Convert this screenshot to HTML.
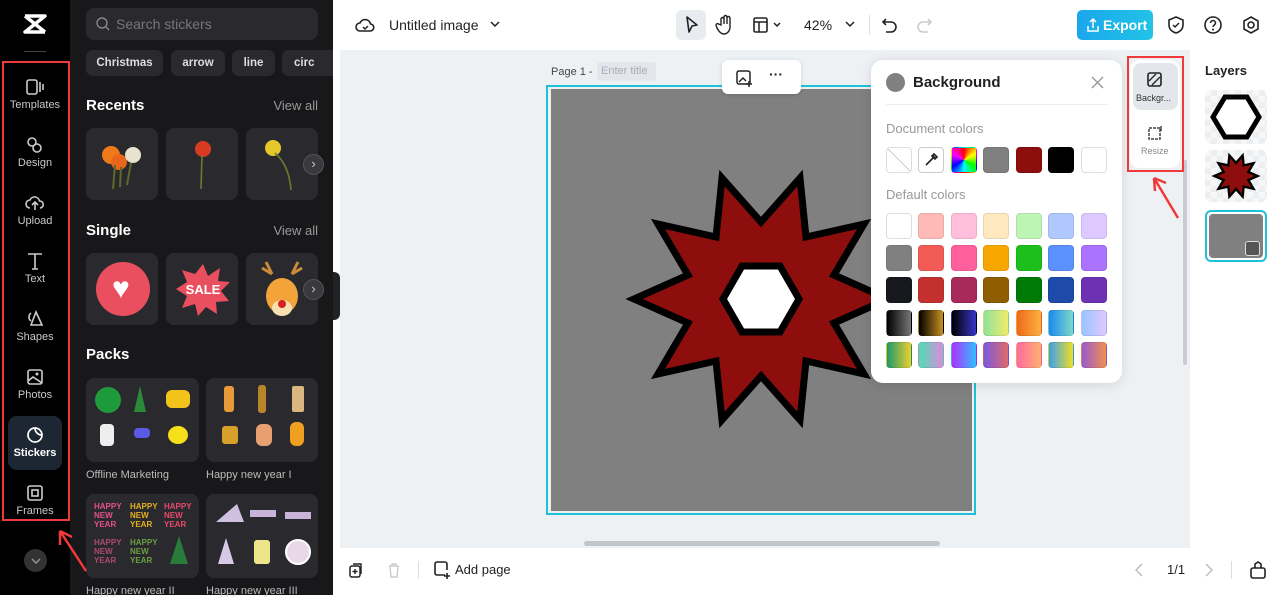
<!DOCTYPE html>
<html><head><meta charset="utf-8"><style>
*{box-sizing:border-box;margin:0;padding:0}
body{width:1280px;height:595px;overflow:hidden;font-family:"Liberation Sans",sans-serif;background:#fff;position:relative}
.a{position:absolute}
.nav{left:0;top:0;width:70px;height:595px;background:#000}
.ni{position:absolute;left:0;width:70px;text-align:center;color:#c9c9cc;font-size:11px}
.ni svg{display:block;margin:0 auto 3px}
.side{left:70px;top:0;width:263px;height:595px;background:#18181b}
.tile{position:absolute;background:#2a2a2e;border-radius:8px}
.chip{position:absolute;top:50px;height:26px;background:#2a2a2e;border-radius:7px;color:#ddd;font-size:11.5px;font-weight:bold;line-height:26px;text-align:center}
.h{position:absolute;color:#fff;font-weight:bold;font-size:15px}
.va{position:absolute;right:15px;color:#999;font-size:13px}
.sw{position:absolute;width:26px;height:26px;border-radius:4px;border:1px solid rgba(0,0,0,.08)}
.lbl{position:absolute;color:#bbb;font-size:11px}
</style></head><body>
<!-- left nav -->
<div class="a nav">
 <svg class="a" style="left:22px;top:13px" width="26" height="22" viewBox="0 0 26 22"><path d="M3 3h20L3 19h20M3 3l20 16" stroke="#fff" stroke-width="3.5" fill="none" stroke-linejoin="round"/></svg>
 <div class="a" style="left:24px;top:51px;width:22px;height:1px;background:#444"></div>
 <div class="ni" style="top:78px"><svg width="20" height="18" viewBox="0 0 20 18"><rect x="2" y="2" width="10" height="14" rx="2" stroke="#ccc" stroke-width="1.6" fill="none"/><path d="M15 4v10M18 6v6" stroke="#ccc" stroke-width="1.6"/></svg>Templates</div>
 <div class="ni" style="top:136px"><svg width="20" height="18" viewBox="0 0 20 18"><circle cx="7" cy="6" r="4" stroke="#ccc" stroke-width="1.6" fill="none"/><circle cx="12" cy="12" r="4" stroke="#ccc" stroke-width="1.6" fill="none"/></svg>Design</div>
 <div class="ni" style="top:194px"><svg width="20" height="18" viewBox="0 0 20 18"><path d="M5 14a4 4 0 010-8 5 5 0 019.5 1A3.5 3.5 0 0115 14M10 16V8M7 11l3-3 3 3" stroke="#ccc" stroke-width="1.6" fill="none"/></svg>Upload</div>
 <div class="ni" style="top:252px"><svg width="20" height="18" viewBox="0 0 20 18"><path d="M3 2h14M10 2v15M7 17h6" stroke="#ccc" stroke-width="1.6" fill="none"/></svg>Text</div>
 <div class="ni" style="top:310px"><svg width="20" height="18" viewBox="0 0 20 18"><path d="M6 3a5 5 0 000 8M11 2l6 13H6z" stroke="#ccc" stroke-width="1.6" fill="none"/></svg>Shapes</div>
 <div class="ni" style="top:368px"><svg width="20" height="18" viewBox="0 0 20 18"><rect x="3" y="2" width="14" height="14" rx="2" stroke="#ccc" stroke-width="1.6" fill="none"/><path d="M3 13l5-4 9 6" stroke="#ccc" stroke-width="1.6" fill="none"/><circle cx="12" cy="6" r="1.5" fill="#ccc"/></svg>Photos</div>
 <div class="a" style="left:8px;top:416px;width:54px;height:54px;border-radius:9px;background:#1d2733"></div>
 <div class="ni" style="top:426px;color:#fff;font-weight:bold"><svg width="20" height="18" viewBox="0 0 20 18"><path d="M17 9a7 7 0 11-7-7c0 4 3 7 7 7z M10 2a7 7 0 017 7" stroke="#fff" stroke-width="1.7" fill="none"/></svg>Stickers</div>
 <div class="ni" style="top:484px"><svg width="20" height="18" viewBox="0 0 20 18"><rect x="3" y="2" width="14" height="14" rx="2" stroke="#ccc" stroke-width="1.6" fill="none"/><rect x="7" y="6" width="6" height="6" stroke="#ccc" stroke-width="1.6" fill="none"/></svg>Frames</div>
 <div class="a" style="left:24px;top:549px;width:23px;height:23px;border-radius:50%;background:#333"></div>
 <svg class="a" style="left:30px;top:556px" width="12" height="10"><path d="M2 3l4 4 4-4" stroke="#999" stroke-width="1.4" fill="none"/></svg>
</div>
<div class="a" style="left:2px;top:61px;width:68px;height:460px;border:2.5px solid #f03a3a"></div>
<!-- side panel -->
<div class="a side">
 <div class="a" style="left:16px;top:8px;width:232px;height:32px;background:#2a2a2e;border-radius:8px;color:#777;font-size:14px;line-height:32px;padding-left:30px">Search stickers</div>
 <svg class="a" style="left:26px;top:17px" width="14" height="14"><circle cx="6" cy="6" r="5" stroke="#888" stroke-width="1.4" fill="none"/><path d="M10 10l3 3" stroke="#888" stroke-width="1.4"/></svg>
 <div class="chip" style="left:16px;width:77px">Christmas</div>
 <div class="chip" style="left:101px;width:54px">arrow</div>
 <div class="chip" style="left:162px;width:43px">line</div>
 <div class="chip" style="left:212px;width:51px;text-align:left;padding-left:12px;border-radius:7px 0 0 7px">circ</div>
 <div class="h" style="left:16px;top:97px">Recents</div><div class="va" style="top:98px">View all</div>
 <div class="tile" style="left:16px;top:128px;width:72px;height:72px"></div>
 <div class="tile" style="left:96px;top:128px;width:72px;height:72px"></div>
 <div class="tile" style="left:176px;top:128px;width:72px;height:72px"></div>
 <svg class="a" style="left:23px;top:135px" width="60" height="60"><circle cx="18" cy="20" r="9" fill="#f07a1a"/><circle cx="26" cy="27" r="8" fill="#e8661a"/><circle cx="40" cy="20" r="8" fill="#e8e2d0"/><path d="M22 30l-2 24M28 32l-1 20M38 28l-4 22" stroke="#5d6a2a" stroke-width="2"/></svg>
 <svg class="a" style="left:103px;top:135px" width="60" height="60"><circle cx="30" cy="14" r="8" fill="#d93a22"/><path d="M29 20l-1 34" stroke="#6c7a2e" stroke-width="1.6"/></svg>
 <svg class="a" style="left:183px;top:135px" width="60" height="60"><circle cx="20" cy="13" r="8" fill="#e6c82a"/><path d="M22 18q14 12 16 37" stroke="#6c7a2e" stroke-width="1.6" fill="none"/></svg>
 <div class="a" style="left:233px;top:154px;width:21px;height:21px;border-radius:50%;background:#3a3a3e;border:1px solid #555;color:#ccc;font-size:13px;text-align:center;line-height:18px">›</div>
 <div class="h" style="left:16px;top:222px">Single</div><div class="va" style="top:223px">View all</div>
 <div class="tile" style="left:16px;top:253px;width:72px;height:72px"></div>
 <div class="tile" style="left:96px;top:253px;width:72px;height:72px"></div>
 <div class="tile" style="left:176px;top:253px;width:72px;height:72px"></div>
 <div class="a" style="left:26px;top:262px;width:54px;height:54px;border-radius:50%;background:#e94f5e"></div>
 <div class="a" style="left:42px;top:278px;color:#fff;font-size:30px;line-height:22px">♥</div>
 <svg class="a" style="left:104px;top:260px" width="58" height="58" viewBox="0 0 58 58"><polygon points="29,4 34,16 46,8 44,21 56,22 47,31 55,41 42,42 43,54 32,47 24,56 21,44 8,48 13,36 2,29 13,22 8,10 21,14" fill="#e94f5e"/><text x="29" y="34" fill="#fff" font-size="13" font-weight="bold" text-anchor="middle" font-family="Liberation Sans">SALE</text></svg>
 <svg class="a" style="left:186px;top:258px" width="52" height="64"><path d="M10 4l6 12M42 4l-6 12M6 10l10 6M46 10l-10 6" stroke="#c98a3a" stroke-width="3"/><ellipse cx="26" cy="38" rx="16" ry="18" fill="#f2a43a"/><ellipse cx="26" cy="50" rx="10" ry="8" fill="#f8dfb0"/><circle cx="26" cy="46" r="4" fill="#d92020"/></svg>
 <div class="a" style="left:233px;top:279px;width:21px;height:21px;border-radius:50%;background:#3a3a3e;border:1px solid #555;color:#ccc;font-size:13px;text-align:center;line-height:18px">›</div>
 <div class="h" style="left:16px;top:346px">Packs</div>
 <div class="tile" style="left:16px;top:378px;width:113px;height:84px"></div>
 <div class="tile" style="left:136px;top:378px;width:112px;height:84px"></div>
 <div class="a" style="left:25px;top:387px;width:26px;height:26px;border-radius:50%;background:#1e9a3a"></div>
 <div class="a" style="left:64px;top:386px;width:12px;height:26px;background:#2a8a3a;clip-path:polygon(50% 0,100% 100%,0 100%)"></div>
 <div class="a" style="left:96px;top:390px;width:24px;height:18px;background:#f2c31a;border-radius:6px"></div>
 <div class="a" style="left:30px;top:424px;width:14px;height:22px;background:#eee;border-radius:4px"></div>
 <div class="a" style="left:64px;top:428px;width:16px;height:10px;background:#5a5ae6;border-radius:4px"></div>
 <div class="a" style="left:98px;top:426px;width:20px;height:18px;background:#f5e01a;border-radius:50%"></div>
 <div class="a" style="left:154px;top:386px;width:10px;height:26px;background:#e89a3a;border-radius:3px"></div>
 <div class="a" style="left:188px;top:385px;width:8px;height:28px;background:#b8862a;border-radius:3px"></div>
 <div class="a" style="left:222px;top:386px;width:12px;height:26px;background:#d8b880;border-radius:2px"></div>
 <div class="a" style="left:152px;top:426px;width:16px;height:18px;background:#d8a02a;border-radius:3px"></div>
 <div class="a" style="left:186px;top:424px;width:16px;height:22px;background:#e8a070;border-radius:6px"></div>
 <div class="a" style="left:220px;top:422px;width:14px;height:24px;background:#f0a020;border-radius:6px"></div>
 <div class="lbl" style="left:16px;top:469px">Offline Marketing</div>
 <div class="lbl" style="left:136px;top:469px">Happy new year I</div>
 <div class="tile" style="left:16px;top:494px;width:113px;height:84px"></div>
 <div class="tile" style="left:136px;top:494px;width:112px;height:84px"></div>
 <div class="a" style="left:24px;top:502px;font-size:8px;line-height:9px;color:#e6508a;font-weight:bold">HAPPY<br>NEW<br>YEAR</div>
 <div class="a" style="left:60px;top:502px;font-size:8px;line-height:9px;color:#e6b020;font-weight:bold">HAPPY<br>NEW<br>YEAR</div>
 <div class="a" style="left:94px;top:502px;font-size:8px;line-height:9px;color:#e64a6a;font-weight:bold">HAPPY<br>NEW<br>YEAR</div>
 <div class="a" style="left:24px;top:538px;font-size:8px;line-height:9px;color:#b04a6a;font-weight:bold">HAPPY<br>NEW<br>YEAR</div>
 <div class="a" style="left:60px;top:538px;font-size:8px;line-height:9px;color:#6aa040;font-weight:bold">HAPPY<br>NEW<br>YEAR</div>
 <div class="a" style="left:100px;top:536px;width:18px;height:28px;background:#2a7a3a;clip-path:polygon(50% 0,100% 100%,0 100%)"></div>
 <div class="a" style="left:146px;top:504px;width:28px;height:18px;background:#cfc0e0;clip-path:polygon(25% 0,50% 100%,0 100%,75% 0,100% 100%,50% 100%)"></div>
 <div class="a" style="left:180px;top:510px;width:26px;height:7px;background:#c8b4d8"></div>
 <div class="a" style="left:215px;top:512px;width:26px;height:7px;background:#c8b4d8"></div>
 <div class="a" style="left:148px;top:538px;width:16px;height:26px;background:#d8c8e8;clip-path:polygon(50% 0,100% 100%,0 100%)"></div>
 <div class="a" style="left:184px;top:540px;width:16px;height:24px;background:#eee58a;border-radius:3px"></div>
 <div class="a" style="left:215px;top:539px;width:26px;height:26px;background:#e8d8e8;border:2px solid #fff;border-radius:50%"></div>
 <div class="lbl" style="left:16px;top:585px">Happy new year II</div>
 <div class="lbl" style="left:136px;top:585px">Happy new year III</div>
</div>
<svg class="a" style="left:52px;top:525px" width="40" height="50"><path d="M34 46L8 6M8 6l0 14M8 6l12 6" stroke="#f03a3a" stroke-width="2.5" fill="none"/></svg>
<div class="a" style="left:333px;top:272px;width:7px;height:48px;background:#222;border-radius:0 6px 6px 0"></div>
<!-- top bar -->
<div class="a" style="left:340px;top:0;width:940px;height:50px;background:#fff"></div>
<svg class="a" style="left:355px;top:16px" width="20" height="18"><path d="M5 15a4 4 0 010-8 5.5 5.5 0 0110.5 1A3.5 3.5 0 0115 15z" stroke="#222" stroke-width="1.6" fill="none"/><path d="M8 11l2 2 3-3" stroke="#222" stroke-width="1.5" fill="none"/></svg>
<div class="a" style="left:389px;top:17px;font-size:14px;color:#222">Untitled image</div>
<svg class="a" style="left:489px;top:20px" width="12" height="10"><path d="M2 2l4 4 4-4" stroke="#222" stroke-width="1.5" fill="none"/></svg>
<div class="a" style="left:676px;top:10px;width:30px;height:30px;border-radius:6px;background:#e8ebef"></div>
<svg class="a" style="left:683px;top:15px" width="18" height="20"><path d="M4 2l10 8-5 1-3 6z" stroke="#222" stroke-width="1.6" fill="none" stroke-linejoin="round"/></svg>
<svg class="a" style="left:715px;top:14px" width="20" height="22"><path d="M6 11V5a1.5 1.5 0 013 0v5V3a1.5 1.5 0 013 0v7V4a1.5 1.5 0 013 0v9c0 4-3 7-6 7s-5-2-7-6l-1-3a1.5 1.5 0 012.5-1z" stroke="#222" stroke-width="1.4" fill="none"/></svg>
<svg class="a" style="left:752px;top:16px" width="32" height="18"><rect x="2" y="2" width="13" height="14" rx="1.5" stroke="#222" stroke-width="1.6" fill="none"/><path d="M2 6h13M7 6v10M22 7l3 3 3-3" stroke="#222" stroke-width="1.5" fill="none"/></svg>
<div class="a" style="left:804px;top:17px;font-size:14px;color:#222">42%</div>
<svg class="a" style="left:844px;top:20px" width="12" height="10"><path d="M2 2l4 4 4-4" stroke="#222" stroke-width="1.5" fill="none"/></svg>
<div class="a" style="left:869px;top:15px;width:1px;height:20px;background:#ddd"></div>
<svg class="a" style="left:881px;top:16px" width="18" height="18"><path d="M5 3L2 6l3 3M2 6h8a5 5 0 010 10H5" stroke="#222" stroke-width="1.6" fill="none"/></svg>
<svg class="a" style="left:915px;top:16px" width="18" height="18"><path d="M13 3l3 3-3 3M16 6H8a5 5 0 000 10h5" stroke="#ccc" stroke-width="1.6" fill="none"/></svg>
<div class="a" style="left:1077px;top:10px;width:76px;height:30px;border-radius:5px;background:linear-gradient(90deg,#1aa7ec,#22c3e6);color:#fff;font-weight:bold;font-size:14px;line-height:30px;padding-left:26px">Export</div>
<svg class="a" style="left:1086px;top:17px" width="14" height="16"><path d="M7 11V2M4 5l3-3 3 3M2 9v5h10V9" stroke="#fff" stroke-width="1.5" fill="none"/></svg>
<svg class="a" style="left:1166px;top:15px" width="20" height="20"><path d="M10 2l7 3v5c0 4-3 7-7 8-4-1-7-4-7-8V5z" stroke="#222" stroke-width="1.6" fill="none"/><path d="M7 10l2 2 4-4" stroke="#222" stroke-width="1.5" fill="none"/></svg>
<svg class="a" style="left:1203px;top:15px" width="20" height="20"><circle cx="10" cy="10" r="8" stroke="#222" stroke-width="1.6" fill="none"/><path d="M7.5 8a2.5 2.5 0 115 0c0 2-2.5 2-2.5 4" stroke="#222" stroke-width="1.5" fill="none"/><circle cx="10" cy="14.5" r="1" fill="#222"/></svg>
<svg class="a" style="left:1241px;top:15px" width="20" height="20"><path d="M10 2l7 4v8l-7 4-7-4V6z" stroke="#222" stroke-width="1.6" fill="none"/><circle cx="10" cy="10" r="3" stroke="#222" stroke-width="1.6" fill="none"/></svg>
<!-- canvas area -->
<div class="a" style="left:340px;top:50px;width:850px;height:498px;background:#eef1f4"></div>
<div class="a" style="left:551px;top:66px;font-size:11px;color:#444">Page 1 -</div>
<div class="a" style="left:597px;top:62px;width:59px;height:19px;background:#e3e6ea;border-radius:3px;font-size:11px;color:#aab;line-height:19px;padding-left:4px">Enter title</div>
<div class="a" style="left:546px;top:85px;width:430px;height:430px;border:2px solid #1fc1d8"></div>
<div class="a" style="left:551px;top:89px;width:421px;height:422px;background:#808080"></div>
<svg class="a" style="left:551px;top:89px" width="421" height="422">
 <polygon transform="translate(210,210)" stroke="#000" stroke-width="7" stroke-linejoin="miter" fill="#8e0e0e" points="127,0 73,24 103,75 45,62 39,121 0,77 -39,121 -45,62 -103,75 -73,24 -127,0 -73,-24 -103,-75 -45,-62 -39,-121 0,-77 39,-121 45,-62 103,-75 73,-24"/>
 <polygon transform="translate(210,210)" stroke="#000" stroke-width="7" fill="#fff" points="38,0 19,-33 -19,-33 -38,0 -19,33 19,33"/>
</svg>
<div class="a" style="left:722px;top:60px;width:79px;height:34px;background:#fff;border-radius:6px;box-shadow:0 1px 4px rgba(0,0,0,.15)"></div>
<svg class="a" style="left:735px;top:69px" width="20" height="18"><rect x="2" y="2" width="13" height="13" rx="2" stroke="#222" stroke-width="1.5" fill="none"/><path d="M4 13l4-4 3 3M14 12v6M11 15h6" stroke="#222" stroke-width="1.5" fill="none"/></svg>
<div class="a" style="left:769px;top:66px;font-size:14px;font-weight:bold;color:#222">···</div>
<div class="a" style="left:1183px;top:160px;width:4px;height:205px;background:#c8ccd0;border-radius:2px"></div>
<div class="a" style="left:584px;top:541px;width:356px;height:5px;background:#c2c6ca;border-radius:3px"></div>
<!-- background popup -->
<div class="a" style="left:871px;top:60px;width:251px;height:323px;background:#fff;border-radius:12px;box-shadow:0 2px 12px rgba(0,0,0,.12)"></div>
<div class="a" style="left:886px;top:73px;width:19px;height:19px;border-radius:50%;background:#808080"></div>
<div class="a" style="left:913px;top:74px;font-size:15px;font-weight:bold;color:#222">Background</div>
<svg class="a" style="left:1090px;top:75px" width="15" height="15"><path d="M2 2l11 11M13 2L2 13" stroke="#999" stroke-width="1.4"/></svg>
<div class="a" style="left:886px;top:104px;width:222px;height:1px;background:#eee"></div>
<div class="a" style="left:886px;top:121px;font-size:13px;color:#999">Document colors</div>
<div class="sw" style="left:886px;top:147px;background:linear-gradient(45deg,#fff 48%,#ccc 49%,#ccc 51%,#fff 52%);border-color:#ddd"></div>
<div class="sw" style="left:918px;top:147px;background:#fff;border-color:#ccc"></div>
<svg class="a" style="left:923px;top:152px" width="16" height="16"><path d="M3 13l7-7M9 3l4 4M11 2l3 3-2 2-3-3z" stroke="#222" stroke-width="1.6" fill="none"/></svg>
<div class="sw" style="left:951px;top:147px;background:conic-gradient(#f00,#ff0,#0f0,#0ff,#00f,#f0f,#f00)"></div>
<div class="sw" style="left:983px;top:147px;background:#808080"></div>
<div class="sw" style="left:1016px;top:147px;background:#8e0e0e"></div>
<div class="sw" style="left:1048px;top:147px;background:#000"></div>
<div class="sw" style="left:1081px;top:147px;background:#fff;border-color:#ddd"></div>
<div class="a" style="left:886px;top:187px;font-size:13px;color:#999">Default colors</div>
<div class="sw" style="left:886px;top:213px;background:#fff;border-color:#ddd"></div><div class="sw" style="left:918px;top:213px;background:#ffbab7"></div><div class="sw" style="left:951px;top:213px;background:#ffbedb"></div><div class="sw" style="left:983px;top:213px;background:#ffe8bd"></div><div class="sw" style="left:1016px;top:213px;background:#bcf5b5"></div><div class="sw" style="left:1048px;top:213px;background:#b0c8ff"></div><div class="sw" style="left:1081px;top:213px;background:#ddc8ff"></div>
<div class="sw" style="left:886px;top:245px;background:#808080"></div><div class="sw" style="left:918px;top:245px;background:#f05b55"></div><div class="sw" style="left:951px;top:245px;background:#ff5f9c"></div><div class="sw" style="left:983px;top:245px;background:#f8a700"></div><div class="sw" style="left:1016px;top:245px;background:#1dbf1d"></div><div class="sw" style="left:1048px;top:245px;background:#5b90ff"></div><div class="sw" style="left:1081px;top:245px;background:#aa72ff"></div>
<div class="sw" style="left:886px;top:277px;background:#16181d"></div><div class="sw" style="left:918px;top:277px;background:#c3302e"></div><div class="sw" style="left:951px;top:277px;background:#a82a5a"></div><div class="sw" style="left:983px;top:277px;background:#8e5e00"></div><div class="sw" style="left:1016px;top:277px;background:#007a06"></div><div class="sw" style="left:1048px;top:277px;background:#1e4aaa"></div><div class="sw" style="left:1081px;top:277px;background:#6d32b4"></div>
<div class="sw" style="left:886px;top:310px;background:linear-gradient(90deg,#000,#777)"></div><div class="sw" style="left:918px;top:310px;background:linear-gradient(90deg,#000,#c99020)"></div><div class="sw" style="left:951px;top:310px;background:linear-gradient(90deg,#000,#3a34c8)"></div><div class="sw" style="left:983px;top:310px;background:linear-gradient(90deg,#8ee39a,#f0ec6a)"></div><div class="sw" style="left:1016px;top:310px;background:linear-gradient(90deg,#f06a1a,#fbb040)"></div><div class="sw" style="left:1048px;top:310px;background:linear-gradient(90deg,#1a8af0,#7ed8c8)"></div><div class="sw" style="left:1081px;top:310px;background:linear-gradient(90deg,#9ac4ff,#e2c8ff)"></div>
<div class="sw" style="left:886px;top:342px;background:linear-gradient(90deg,#1a9a6a,#f0d030)"></div><div class="sw" style="left:918px;top:342px;background:linear-gradient(90deg,#4ae0b0,#e08ae0)"></div><div class="sw" style="left:951px;top:342px;background:linear-gradient(90deg,#b030ff,#30c0ff)"></div><div class="sw" style="left:983px;top:342px;background:linear-gradient(90deg,#7a5ae0,#e06a6a)"></div><div class="sw" style="left:1016px;top:342px;background:linear-gradient(90deg,#ff6aa0,#ffb070)"></div><div class="sw" style="left:1048px;top:342px;background:linear-gradient(90deg,#3aa0f0,#f0e020)"></div><div class="sw" style="left:1081px;top:342px;background:linear-gradient(90deg,#9a5ad0,#f09050)"></div>
<!-- right tool column -->
<div class="a" style="left:1130px;top:60px;width:50px;height:108px;background:#fff;border-radius:10px"></div>
<div class="a" style="left:1133px;top:63px;width:45px;height:47px;background:#e3e6ea;border-radius:8px"></div>
<svg class="a" style="left:1146px;top:71px" width="18" height="18"><rect x="2" y="2" width="13" height="13" rx="2" stroke="#222" stroke-width="1.6" fill="none"/><path d="M3 10l7-7M6 14l8-8" stroke="#222" stroke-width="1.3"/></svg>
<div class="a" style="left:1136px;top:93px;font-size:9px;color:#333">Backgr...</div>
<svg class="a" style="left:1146px;top:124px" width="18" height="18"><rect x="3" y="4" width="11" height="11" stroke="#444" stroke-width="1.5" fill="none" stroke-dasharray="3 1"/><path d="M15 2v5" stroke="#444" stroke-width="1.5"/></svg>
<div class="a" style="left:1141px;top:146px;font-size:9px;color:#888">Resize</div>
<div class="a" style="left:1127px;top:56px;width:57px;height:116px;border:2.5px solid #f03a3a"></div>
<svg class="a" style="left:1148px;top:172px" width="36" height="50"><path d="M30 46L6 6M6 6l1 13M6 6l12 5" stroke="#f03a3a" stroke-width="2.5" fill="none"/></svg>
<!-- layers -->
<div class="a" style="left:1190px;top:50px;width:90px;height:498px;background:#fff"></div>
<div class="a" style="left:1205px;top:63px;font-size:13px;font-weight:bold;color:#222">Layers</div>
<div class="a" style="left:1205px;top:90px;width:62px;height:54px;border-radius:6px;background:repeating-conic-gradient(#eceef0 0 25%,#f6f7f8 0 50%) 0 0/12px 12px"></div>
<svg class="a" style="left:1205px;top:90px" width="62" height="54"><polygon points="54,27 42,7 20,7 8,27 20,47 42,47" fill="#fff" stroke="#000" stroke-width="5"/></svg>
<div class="a" style="left:1205px;top:150px;width:62px;height:52px;border-radius:6px;background:repeating-conic-gradient(#eceef0 0 25%,#f6f7f8 0 50%) 0 0/12px 12px"></div>
<svg class="a" style="left:1205px;top:150px" width="62" height="52"><polygon transform="translate(31,26) scale(0.17)" stroke="#000" stroke-width="14" fill="#8e0e0e" points="127,0 73,24 103,75 45,62 39,121 0,77 -39,121 -45,62 -103,75 -73,24 -127,0 -73,-24 -103,-75 -45,-62 -39,-121 0,-77 39,-121 45,-62 103,-75 73,-24"/></svg>
<div class="a" style="left:1205px;top:210px;width:62px;height:52px;border-radius:6px;border:2px solid #1fc1d8;background:#fff"></div>
<div class="a" style="left:1209px;top:214px;width:54px;height:44px;border-radius:4px;background:#808080"></div>
<div class="a" style="left:1245px;top:241px;width:15px;height:15px;border-radius:3px;background:#555;border:1px solid #ddd"></div>
<!-- bottom bar -->
<div class="a" style="left:340px;top:548px;width:940px;height:47px;background:#fff"></div>
<svg class="a" style="left:347px;top:561px" width="18" height="18"><rect x="3" y="5" width="10" height="11" rx="2" stroke="#222" stroke-width="1.5" fill="none"/><path d="M6 3h8v10M8 8v5M5.5 10.5h5" stroke="#222" stroke-width="1.4" fill="none"/></svg>
<svg class="a" style="left:385px;top:561px" width="18" height="18"><path d="M4 5h10M7 5V3h4v2M5 5l1 11h6l1-11" stroke="#ccc" stroke-width="1.4" fill="none"/></svg>
<div class="a" style="left:418px;top:561px;width:1px;height:18px;background:#ddd"></div>
<svg class="a" style="left:432px;top:560px" width="20" height="20"><path d="M13 15H5a2 2 0 01-2-2V4a2 2 0 012-2h8a2 2 0 012 2v6M15 13v6M12 16h6" stroke="#222" stroke-width="1.6" fill="none"/></svg>
<div class="a" style="left:455px;top:562px;font-size:13px;color:#222">Add page</div>
<svg class="a" style="left:1133px;top:562px" width="12" height="16"><path d="M9 2L3 8l6 6" stroke="#bbb" stroke-width="1.4" fill="none"/></svg>
<div class="a" style="left:1167px;top:562px;font-size:13px;color:#222">1/1</div>
<svg class="a" style="left:1203px;top:562px" width="12" height="16"><path d="M3 2l6 6-6 6" stroke="#bbb" stroke-width="1.4" fill="none"/></svg>
<div class="a" style="left:1231px;top:561px;width:1px;height:18px;background:#ddd"></div>
<svg class="a" style="left:1249px;top:560px" width="18" height="20"><rect x="2" y="8" width="14" height="10" rx="2" stroke="#222" stroke-width="1.6" fill="none"/><path d="M6 8V4l3-2 3 2v4" stroke="#222" stroke-width="1.6" fill="none"/></svg>
</body></html>
